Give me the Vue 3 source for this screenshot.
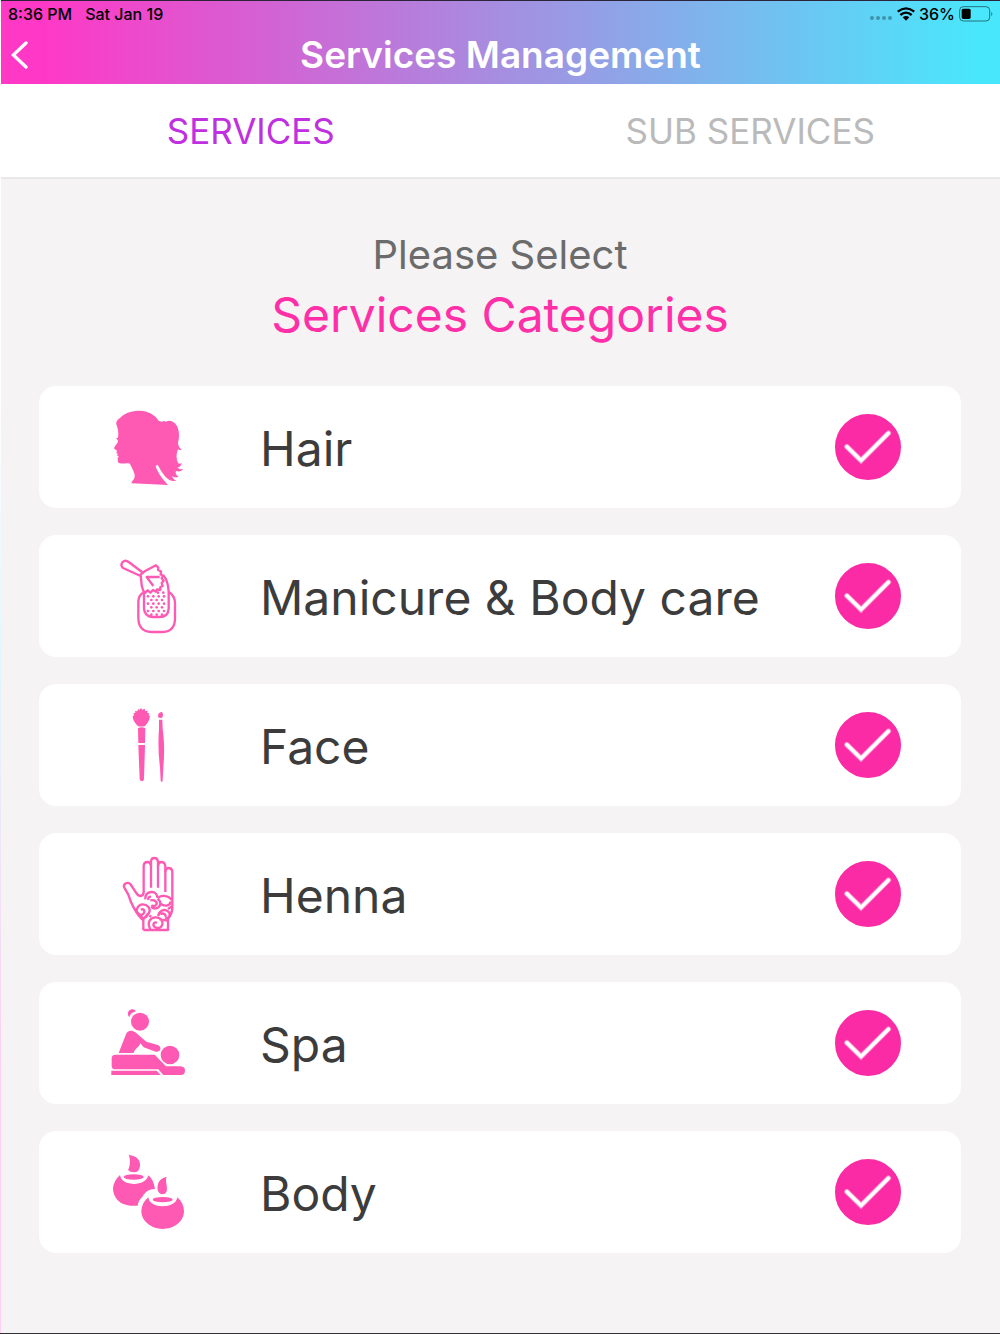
<template>
  <div class="app">
    <header class="header">
      <div class="status">
        <span class="status__time">8:36 PM</span>
        <span class="status__date">Sat Jan 19</span>
        <span class="status__right">
          <svg class="status__dots" width="24" height="16" viewBox="0 0 24 16" aria-hidden="true">
            <circle cx="3" cy="12" r="2" />
            <circle cx="9" cy="12" r="2" />
            <circle cx="15" cy="12" r="2" />
            <circle cx="21" cy="12" r="2" />
          </svg>
          <svg width="18" height="14" viewBox="0 0 54 42" aria-hidden="true">
            <g fill="none" stroke="#000" stroke-width="7">
              <path d="M2 14Q27 -6 52 14" />
              <path d="M10 24Q27 10 44 24" />
            </g>
            <path d="M17 31Q27 23 37 31L27 41Z" />
          </svg>
          <span>36%</span>
          <svg width="35" height="16" viewBox="0 0 105 48" aria-hidden="true">
            <rect x="2" y="2" width="90" height="43" rx="11" fill="none" stroke="#000" stroke-opacity=".5" stroke-width="3" />
            <rect x="8" y="8" width="27" height="31" rx="5" />
            <path d="M97 17Q103 23 97 31Z" fill-opacity=".5" />
          </svg>
        </span>
      </div>
      <div class="nav">
        <button class="nav__back" type="button" aria-label="Back">
          <svg width="17" height="28" viewBox="0 0 51 84" aria-hidden="true">
            <path d="M45 6L7 42L45 78" fill="none" stroke="#fff" stroke-width="10" stroke-linecap="round" stroke-linejoin="miter" />
          </svg>
        </button>
        <h1 class="nav__title">Services Management</h1>
      </div>
    </header>

    <nav class="tabs">
      <button
        v-for="tab in tabs"
        :key="tab"
        type="button"
        class="tabs__item"
        :class="{ 'tabs__item--active': tab === activeTab }"
        @click="activeTab = tab"
      >
        {{ tab }}
      </button>
    </nav>

    <main class="content">
      <h2 class="heading">
        <span class="heading__prompt">Please Select</span>
        <span class="heading__subject">Services Categories</span>
      </h2>

      <div class="list">
        <label v-for="item in categories" :key="item.id" class="card">
          <svg class="card__icon" :viewBox="item.viewBox" aria-hidden="true">
            <!-- Head with ponytail -->
            <g v-if="item.id === 'hair'">
              <path
                d="M49 73C47 66 52 59 60 54C74 39 95 32 120 32C144 33 164 43 176 62L184 65L192 63L198 65C209 59 222 65 229 75C238 89 239 110 234 129C235 139 239 144 245 149C241 151 237 150 234 148C228 162 228 176 234 189C239 193 242 191 245 188C244 198 238 202 232 202C237 208 243 209 249 206C246 213 239 216 228 213C225 219 228 226 236 230C228 234 221 232 216 228C218 235 223 240 229 242C207 249 190 225 178 203L173 194L167 198C170 210 181 231 204 255L94 250C95 242 103 239 104 230C106 219 95 204 90 191C79 188 69 192 60 190C51 188 54 180 53 174L56 169L50 166L54 162L49 159L51 153C48 148 44 149 42 145C43 139 52 131 54 125C54 120 51 119 48 115L54 113C57 97 53 84 49 73Z"
              />
            </g>

            <!-- Spatula over a wax tub -->
            <g v-else-if="item.id === 'manicure'" class="line">
              <path d="M130 75L86 42Q76 34 68 42Q60 51 69 60L122 84" />
              <path
                d="M122 80L134 70L168 52L175 59L174 66L183 70L182 79L188 82L185 91L191 98L185 105L188 114L181 117L181 126L171 124L168 131L159 126L151 134L143 127L136 134L130 129L125 112Z"
              />
              <path d="M179 87H140L160 114" />
              <path d="M190 82Q204 98 206 130V181Q205 207 178 207H158Q133 205 132 181V133" />
              <path d="M129 134Q116 142 115 160V211Q116 251 154 252H189Q224 250 225 213V164Q224 144 208 133" />
              <g stroke="none">
                <circle v-for="dot in waxDots" :key="dot.x + '-' + dot.y" :cx="dot.x" :cy="dot.y" r="4" />
              </g>
            </g>

            <!-- Makeup brushes -->
            <g v-else-if="item.id === 'face'">
              <path
                d="M113 87C104 78 98 68 98 58L102 55L100 49L106 48L105 42L112 43L114 36L119 39L123 33L127 38L134 35L136 42L143 41L142 48L148 49L146 55L150 58C149 70 142 80 135 87Q124 90 113 87Z"
              />
              <path d="M114 93Q125 89 136 93L135 138H115Z" />
              <path d="M115 144H135L132 246Q131 253 126 253Q120 253 119 246Z" />
              <path d="M176 62C172 55 175 46 185 45Q188 44 187 48C191 53 189 59 185 63Z" />
              <path d="M177 68H187L188 96C194 137 193 177 190 210L188 251Q185 258 182 251L180 211C175 173 174 133 177 96Z" />
            </g>

            <!-- Hand with swirls -->
            <g v-else-if="item.id === 'henna'" class="line">
              <path
                d="M130 255V226C107 206 91 170 85 149L73 128C68 117 82 109 91 117L108 143Q114 153 122 153Q131 151 131 141V62Q132 51 142 51Q152 51 153 63V128"
              />
              <path d="M153 63V51Q153 39 163 39Q173 39 174 51V128" />
              <path d="M174 65Q174 51 185 51Q196 52 196 65V141" />
              <path d="M196 80Q197 69 206 69Q216 69 217 80V190Q216 207 204 222V255H130" />
              <path d="M136 163C135 148 144 142 154 141C165 140 172 148 172 158M145 165Q143 155 153 155" />
              <path d="M151 166C164 163 173 171 169 179Q163 187 154 181M154 185C160 195 181 191 181 174Q180 165 172 162M173 160C181 149 204 150 215 164" />
              <path d="M181 176C196 187 213 181 211 169" />
              <path d="M137 218L147 204C154 190 141 177 127 178C110 180 105 202 117 209C127 213 136 204 132 195Q128 191 123 195" />
              <path d="M112 202L131 222L145 205M148 212L154 215" />
              <path d="M175 214C175 198 192 190 204 199C216 209 206 221 195 220M181 208C190 202 199 208 196 216M204 192L216 184" />
              <path d="M151 253C141 234 148 219 165 217C182 216 191 229 186 241C181 253 162 251 160 239Q162 229 171 234M179 224Q191 224 202 227" />
            </g>

            <!-- Massage -->
            <g v-else-if="item.id === 'spa'">
              <circle cx="120" cy="83" r="27" />
              <path d="M88 70C80 60 84 48 95 46Q103 44 108 52C96 55 90 61 88 70Z" />
              <path
                d="M56 177L78 121C82 108 96 107 106 115L139 143L173 153Q183 157 181 166Q179 175 167 173L131 160L121 148C118 160 105 163 101 177Z"
              />
              <circle cx="210" cy="183" r="28" />
              <path d="M46 182H164L198 217H242Q255 218 255 230Q255 243 242 243H190L175 226H46Q35 226 35 215V193Q35 183 46 182Z" />
              <path d="M34 230H170L182 243H34Z" />
            </g>

            <!-- Candles -->
            <g v-else>
              <path d="M86 35C111 39 122 51 120 70C118 80 114 87 105 88Q91 89 84 81C92 66 91 47 86 35Z" />
              <ellipse cx="101" cy="102" rx="30" ry="8" />
              <path d="M60 96C64 131 138 132 145 97C156 106 162 119 165 138C147 139 136 145 127 162Q115 172 113 188H91C60 187 39 164 39 136Q41 113 60 96Z" />
              <path d="M200 101C194 115 204 130 200 145Q197 154 187 154C170 151 171 132 175 120Q181 105 200 101Z" />
              <ellipse cx="188" cy="170" rx="30" ry="8" />
              <path d="M145 163C148 199 228 199 232 163C245 174 252 188 252 205C251 238 220 258 188 258C153 257 124 234 124 204Q125 179 145 163Z" />
            </g>
          </svg>
          <span class="card__name">{{ item.name }}</span>
          <span class="check">
            <input v-model="item.selected" class="check__input" type="checkbox" />
            <svg v-if="item.selected" class="check__mark" viewBox="0 0 200 200" aria-hidden="true">
              <path class="check__glow" d="M36 99L79 141L162 58" />
              <path d="M36 99L79 141L162 58" />
            </svg>
          </span>
        </label>
      </div>
    </main>
  </div>
</template>

<script setup>
import { ref } from "vue";

const tabs = ["SERVICES", "SUB SERVICES"];
const activeTab = ref("SERVICES");

const categories = ref([
  { id: "hair", name: "Hair", viewBox: "0 -9 300 300", selected: true },
  { id: "manicure", name: "Manicure & Body care", viewBox: "0 -6 300 300", selected: true },
  { id: "face", name: "Face", viewBox: "0 -6 300 300", selected: true },
  { id: "henna", name: "Henna", viewBox: "0 -3 300 300", selected: true },
  { id: "spa", name: "Spa", viewBox: "0 -3 300 300", selected: true },
  { id: "body", name: "Body", viewBox: "0 -3 300 300", selected: true },
]);

// Staggered rows of holes in the wax tub
const waxDots = [];
for (let row = 0; row < 6; row++) {
  const shifted = row % 2 === 1;
  for (let col = 0; col < (shifted ? 3 : 4); col++) {
    waxDots.push({ x: (shifted ? 154 : 144) + col * 16, y: 145 + row * 11 });
  }
}
waxDots.push({ x: 174, y: 134 }, { x: 190, y: 134 });
</script>

<style>
body {
  margin: 0;
}
</style>

<style scoped>
.app {
  box-sizing: border-box;
  min-height: 100vh;
  display: flex;
  flex-direction: column;
  padding-left: 1px;
  border-bottom: 1px solid #333136;
  background: linear-gradient(#fff 30%, #e0f6ff 50%, #ffd0f2 80%);
  font-family: Inter, "Liberation Sans", sans-serif;
}

.header {
  border-top: 1px solid #2c2438;
  background: linear-gradient(90deg, #ff38c6 4%, #49e7fc 98%);
}

.status {
  display: flex;
  align-items: center;
  height: 26px;
  padding: 0 6px 0 7px;
  font-size: 16px;
  line-height: 24px;
  font-weight: 500;
  color: #000;
}

.status__date {
  margin-left: 13px;
}

.status__right {
  display: flex;
  align-items: center;
  gap: 4px;
  margin-left: auto;
}

.status__dots {
  opacity: 0.3;
}

.nav {
  display: grid;
  grid-template-columns: 60px 1fr 60px;
  align-items: center;
  height: 56px;
  padding-bottom: 1px;
}

.nav__back {
  display: flex;
  align-items: center;
  height: 56px;
  padding: 0 0 0 10px;
  border: 0;
  background: none;
  cursor: pointer;
}

.nav__title {
  margin: 0;
  font-size: 37px;
  line-height: 56px;
  font-weight: 600;
  text-align: center;
  color: #fff;
}

.tabs {
  display: grid;
  grid-template-columns: 1fr 1fr;
  border-bottom: 2px solid #e9e8e9;
  background: #fff;
}

.tabs__item {
  height: 93px;
  padding: 0;
  border: 0;
  background: none;
  font-family: inherit;
  font-size: 35px;
  color: #bababa;
  cursor: pointer;
}

.tabs__item--active {
  color: #bf30e0;
}

.content {
  flex: 1;
  padding: 48px 39px 80px 38px;
  background: #f5f3f4;
}

.heading {
  display: flex;
  flex-direction: column;
  margin: 0 0 39px;
  font-weight: 400;
  text-align: center;
}

.heading__prompt {
  font-size: 40px;
  line-height: 56px;
  color: #6b6b6b;
}

.heading__subject {
  font-size: 48px;
  line-height: 64px;
  color: #ff2fa8;
}

.list {
  display: flex;
  flex-direction: column;
  gap: 27px;
}

.card {
  display: flex;
  align-items: center;
  height: 122px;
  padding: 0 60px 0 61px;
  box-sizing: border-box;
  border-radius: 17px;
  background: #fff;
  cursor: pointer;
}

.card__icon {
  flex: none;
  width: 100px;
  height: 100px;
  margin-right: 60px;
  fill: #ff5ab3;
}

.line {
  stroke: #ff5ab3;
  stroke-width: 7;
  stroke-linejoin: round;
}

.line > path {
  fill: none;
}

.card__name {
  flex: 1;
  padding-top: 4px;
  font-size: 48px;
  line-height: 64px;
  color: #3c3c3c;
}

.check {
  display: grid;
  flex: none;
  width: 66px;
  height: 66px;
}

.check__input,
.check__mark {
  grid-area: 1 / 1;
  width: 66px;
  height: 66px;
  margin: 0;
}

.check__input {
  appearance: none;
  border: 2px solid #fa2ba5;
  border-radius: 50%;
  background: #fff;
  cursor: pointer;
}

.check__input:checked {
  background: #fa2ba5;
}

.check__mark {
  pointer-events: none;
  z-index: 1;
  fill: none;
  stroke: #fff;
  stroke-width: 11;
  stroke-linecap: round;
}

.check__glow {
  stroke-width: 17;
  stroke-opacity: 0.4;
}
</style>
